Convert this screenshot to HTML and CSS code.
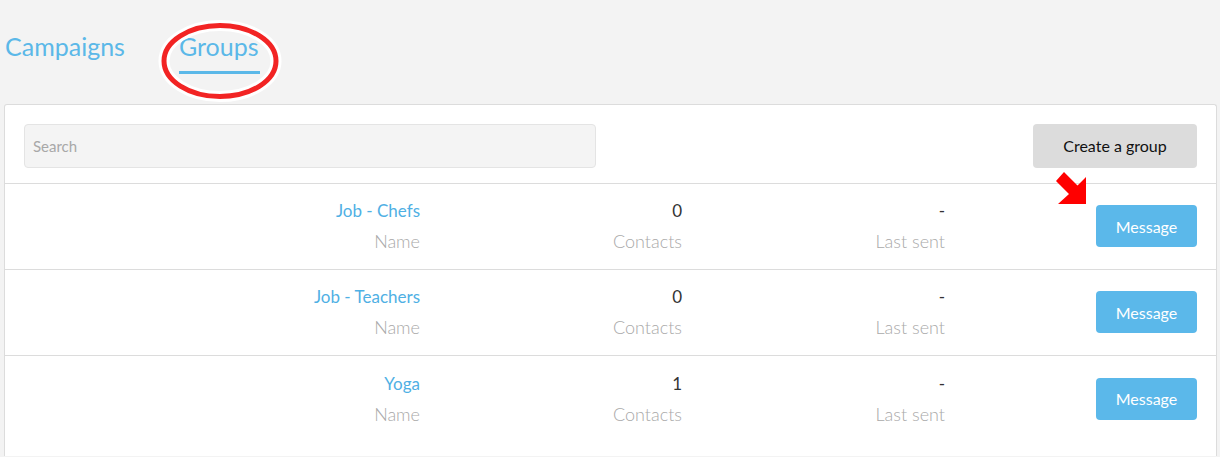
FILE: index.html
```html
<!DOCTYPE html>
<html>
<head>
<meta charset="utf-8">
<link rel="stylesheet" href="styles.css">
</head>
<body>
<nav class="tabs">
  <a class="tab">Campaigns</a>
  <a class="tab active">Groups</a>
  <svg class="circle-mark" width="130" height="90" viewBox="0 0 130 90">
    <ellipse cx="65" cy="45" rx="56" ry="35.5" fill="none" stroke="#fff" stroke-width="11"/>
    <ellipse cx="65" cy="45" rx="56" ry="35.5" fill="none" stroke="#f22424" stroke-width="5"/>
  </svg>
</nav>
<section class="card">
  <div class="toolbar">
    <input class="search" type="text" placeholder="Search">
    <button class="btn-create">Create a group</button>
    <svg class="arrow-mark" width="36" height="36" viewBox="1054 170 36 36">
      <polygon points="1064,172 1077.5,185.5 1086,177 1086,204 1058,204 1069,194 1056,181" fill="#ff0000"/>
    </svg>
  </div>
  <div class="row">
    <div class="cell"><div class="val link">Job - Chefs</div><div class="lbl">Name</div></div>
    <div class="cell"><div class="val">0</div><div class="lbl">Contacts</div></div>
    <div class="cell"><div class="val">-</div><div class="lbl">Last sent</div></div>
    <div class="action"><button class="btn-msg">Message</button></div>
  </div>
  <div class="row">
    <div class="cell"><div class="val link">Job - Teachers</div><div class="lbl">Name</div></div>
    <div class="cell"><div class="val">0</div><div class="lbl">Contacts</div></div>
    <div class="cell"><div class="val">-</div><div class="lbl">Last sent</div></div>
    <div class="action"><button class="btn-msg">Message</button></div>
  </div>
  <div class="row">
    <div class="cell"><div class="val link">Yoga</div><div class="lbl">Name</div></div>
    <div class="cell"><div class="val">1</div><div class="lbl">Contacts</div></div>
    <div class="cell"><div class="val">-</div><div class="lbl">Last sent</div></div>
    <div class="action"><button class="btn-msg">Message</button></div>
  </div>
</section>
</body>
</html>
```
FILE: styles.css
```css
* { box-sizing: border-box; }
html, body { margin: 0; padding: 0; }
body {
  background: #f3f3f3;
  font-family: Lato, "Open Sans", sans-serif;
  color: #333;
  width: 1220px;
  height: 457px;
  overflow: hidden;
}
.tabs {
  position: relative;
  display: flex;
  gap: 54px;
  padding: 30px 0 0 5px;
  height: 104px;
}
.tab {
  font-size: 25px;
  color: #5bb8e8;
  line-height: 32px;
  height: 44px;
  display: block;
}
.tab.active {
  border-bottom: 3px solid #5bb8e8;
  width: 81px;
  height: 44px;
}
.circle-mark {
  position: absolute;
  left: 155px;
  top: 16px;
}
.card {
  margin-left: 4px;
  width: 1213px;
  background: #fff;
  border: 1px solid #dcdcdc;
  border-bottom: none;
  border-radius: 3px 3px 0 0;
  padding-bottom: 14px;
}
.toolbar {
  position: relative;
  display: flex;
  justify-content: space-between;
  align-items: flex-start;
  padding: 19px 19px 15px 19px;
  border-bottom: 1px solid #dcdcdc;
}
.search {
  width: 572px;
  height: 44px;
  background: #f4f4f4;
  border: 1px solid #e4e4e4;
  border-radius: 4px;
  padding: 0 8px;
  font-family: Lato, sans-serif;
  font-size: 15px;
  color: #333;
  outline: none;
}
.search::placeholder { color: #a8a8a8; }
.btn-create {
  width: 164px;
  height: 44px;
  background: #dcdcdc;
  border: none;
  border-radius: 4px;
  font-family: Lato, sans-serif;
  font-size: 16px;
  color: #111;
  padding-bottom: 2px;
}
.arrow-mark {
  position: absolute;
  left: 1049px;
  top: 65px;
}
.row {
  display: grid;
  grid-template-columns: 415px 262px 263px 1fr;
  align-items: center;
  height: 86px;
  border-bottom: 1px solid #dcdcdc;
}
.row:last-child { border-bottom: none; }
.cell {
  text-align: right;
  font-size: 17px;
  line-height: 30px;
  margin-top: -1px;
}
.val { color: #333; }
.val.link { color: #4fb0e4; }
.lbl { color: #a9a9a9; font-weight: 300; font-size: 18px; }
.action {
  display: flex;
  justify-content: flex-end;
  padding-right: 19px;
}
.btn-msg {
  width: 101px;
  height: 42px;
  margin-top: -1px;
  background: #5bb8ea;
  border: none;
  border-radius: 4px;
  color: #fff;
  font-family: Lato, sans-serif;
  font-size: 16px;
}
```
